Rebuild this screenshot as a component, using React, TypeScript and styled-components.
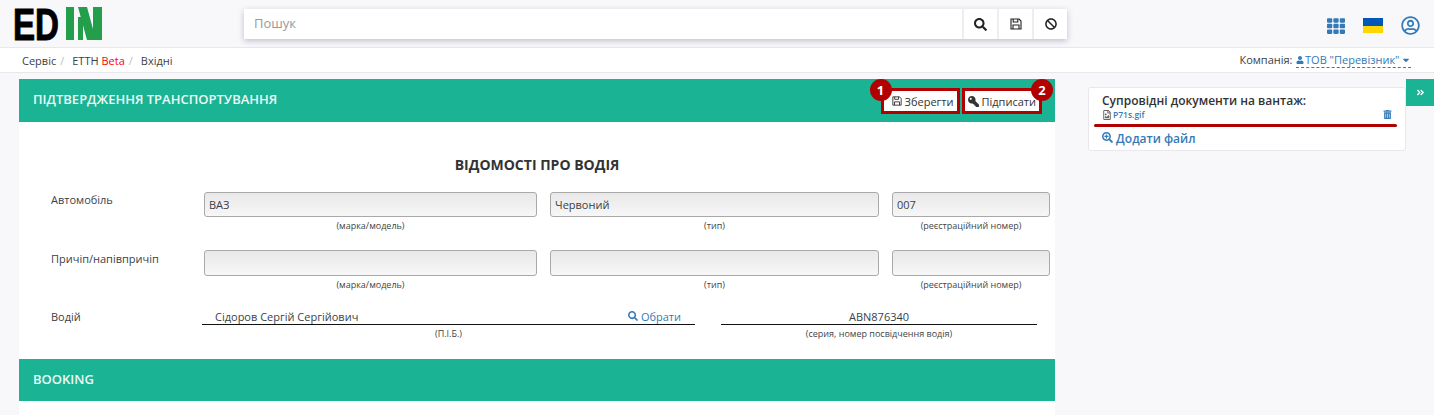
import React from 'react'
import styled, { createGlobalStyle } from 'styled-components'
import { FaSearch, FaBan, FaUser, FaKey, FaCaretDown, FaSearchPlus, FaTrashAlt, FaRegFileImage, FaAngleDoubleRight, FaTh, FaRegUserCircle } from 'react-icons/fa'

const GlobalStyle = createGlobalStyle`
  html, body { margin: 0; padding: 0; background: #f8f8fb; }
  body { font-family: "Open Sans", "Liberation Sans", sans-serif; font-size: 12px; color: #3a3f47; overflow: hidden; }
`

function Floppy({ size }: { size: number }) {
  return (
    <svg width={size} height={size} viewBox="0 0 12 12" fill="none" stroke="currentColor" strokeWidth="1.1">
      <path d="M1 1h8l2 2v8H1z" />
      <path d="M3.2 1v3h4.6V1M3 11V7h6v4" />
    </svg>
  )
}

export default function App() {
  return (
    <>
      <GlobalStyle />
      <Page>
        <Header>
          <Logo />
          <SearchBar>
            <SearchText>Пошук</SearchText>
            <SearchButton><FaSearch size={13} /></SearchButton>
            <SearchButton><Floppy size={12} /></SearchButton>
            <SearchButton><FaBan size={12} /></SearchButton>
          </SearchBar>
          <HeaderIcons>
            <FaTh size={18} color="#337ab7" />
            <Flag><FlagBlue /><FlagYellow /></Flag>
            <FaRegUserCircle size={19} color="#337ab7" />
          </HeaderIcons>
        </Header>
        <Crumbs>
          <CrumbList>
            <span>Сервіс</span><Slash>/</Slash>
            <span>ЕТТН <Beta>Beta</Beta></span><Slash>/</Slash>
            <span>Вхідні</span>
          </CrumbList>
          <Company>
            Компанія:
            <CompanyLink><FaUser size={8} />ТОВ "Перевізник"<FaCaretDown size={10} /></CompanyLink>
          </Company>
        </Crumbs>
        <Content>
          <Main>
            <Band>
              <BandTitle>ПІДТВЕРДЖЕННЯ ТРАНСПОРТУВАННЯ</BandTitle>
              <BandActions>
                <ActionButton $padLeft={8}>
                  <Badge>1</Badge>
                  <Floppy size={10} /> Зберегти
                </ActionButton>
                <ActionButton $padLeft={3}>
                  <Badge $right>2</Badge>
                  <KeyIcon size={11} /> Підписати
                </ActionButton>
              </BandActions>
            </Band>
            <FormBody>
              <FormTitle>ВІДОМОСТІ ПРО ВОДІЯ</FormTitle>
              <FormRow>
                <RowLabel>Автомобіль</RowLabel>
                <div><Input>ВАЗ</Input><Hint>(марка/модель)</Hint></div>
                <div><Input>Червоний</Input><Hint>(тип)</Hint></div>
                <div><Input>007</Input><Hint>(реєстраційний номер)</Hint></div>
              </FormRow>
              <FormRow>
                <RowLabel $low>Причіп/напівпричіп</RowLabel>
                <div><Input $tall /><Hint>(марка/модель)</Hint></div>
                <div><Input $tall /><Hint>(тип)</Hint></div>
                <div><Input $tall /><Hint>(реєстраційний номер)</Hint></div>
              </FormRow>
              <DriverRow>
                <DriverLabel>Водій</DriverLabel>
                <DriverName>
                  <UnderLine>
                    <span>Сідоров Сергій Сергійович</span>
                    <PickLink><FaSearch size={10} /> Обрати</PickLink>
                  </UnderLine>
                  <Hint>(П.І.Б.)</Hint>
                </DriverName>
                <DriverDoc>
                  <DocLine>ABN876340</DocLine>
                  <Hint>(серия, номер посвідчення водія)</Hint>
                </DriverDoc>
              </DriverRow>
            </FormBody>
            <Band $second>
              <BandTitle>BOOKING</BandTitle>
            </Band>
            <FormTail />
          </Main>
          <Side>
            <DocsCard>
              <DocsTitle>Супровідні документи на вантаж:</DocsTitle>
              <FileRow>
                <FileName><FaRegFileImage size={10} color="#666" />P71s.gif</FileName>
                <TrashIcon size={9} />
              </FileRow>
              <RedLine />
              <AddFile><FaSearchPlus size={11} /> Додати файл</AddFile>
            </DocsCard>
            <SideToggle><FaAngleDoubleRight size={9} /></SideToggle>
          </Side>
        </Content>
      </Page>
    </>
  )
}

function Logo() {
  return (
    <LogoBox>
      <svg width="102" height="50" viewBox="0 0 102 50">
        <text x="13" y="40" fontFamily="Liberation Sans" fontWeight="700" fontSize="44" textLength="46" lengthAdjust="spacingAndGlyphs" stroke="#000" strokeWidth="1" fill="#000">ED</text>
        <rect x="66" y="7" width="8" height="33" fill="#239f4b" />
        <rect x="78" y="17" width="5" height="23" fill="#239f4b" />
        <polygon points="78,7 87,7 96,40 87,40" fill="#239f4b" />
        <rect x="93" y="7" width="9" height="33" fill="#239f4b" />
      </svg>
    </LogoBox>
  )
}

const Page = styled.div`
  width: 1434px;
  height: 415px;
  overflow: hidden;
`

const Header = styled.header`
  height: 47px;
  display: flex;
  align-items: flex-start;
  background: #f8f8fb;
  border-bottom: 1px solid #e7e7ec;
`

const LogoBox = styled.div`
  width: 244px;
  height: 47px;
`

const SearchBar = styled.div`
  margin-top: 9px;
  width: 823px;
  height: 30px;
  display: flex;
  background: #fff;
  box-shadow: 0 2px 6px rgba(60, 60, 90, 0.3);
`

const SearchText = styled.div`
  flex: 1;
  padding-left: 10px;
  line-height: 29px;
  font-size: 13px;
  color: #999;
`

const SearchButton = styled.div`
  width: 33px;
  display: flex;
  align-items: center;
  justify-content: center;
  border-left: 2px solid #eee;
  color: #222;
`

const HeaderIcons = styled.div`
  margin-left: 260px;
  margin-top: 16px;
  display: flex;
  align-items: center;
  gap: 18px;
`

const Flag = styled.div`
  width: 20px;
  height: 15px;
  display: flex;
  flex-direction: column;
`

const FlagBlue = styled.div`
  flex: 1;
  background: #0057b7;
`

const FlagYellow = styled.div`
  flex: 1;
  background: #ffd700;
`

const Crumbs = styled.div`
  height: 24px;
  display: flex;
  align-items: center;
  justify-content: space-between;
  padding: 0 23px 0 22px;
  background: #fff;
  border-bottom: 1px solid #e7e7ec;
  font-size: 11px;
`

const CrumbList = styled.div`
  display: flex;
  gap: 4px;
`

const Slash = styled.span`
  color: #bbb;
  margin-right: 4px;
`

const Beta = styled.span`
  color: #f00;
`

const Company = styled.div`
  display: flex;
  gap: 3px;
`

const CompanyLink = styled.span`
  display: inline-flex;
  align-items: center;
  gap: 1.5px;
  color: #337ab7;
  border-bottom: 1px dashed #337ab7;
`

const Content = styled.div`
  display: flex;
  padding: 6px 0 0 19px;
  align-items: flex-start;
`

const Main = styled.main`
  width: 1036px;
  background: #fff;
`

const Band = styled.div<{ $second?: boolean }>`
  height: ${p => (p.$second ? 42 : 43)}px;
  display: flex;
  align-items: center;
  justify-content: space-between;
  padding: 0 13px 0 14px;
  background: #1ab394;
`

const BandTitle = styled.h2`
  margin: 0 0 3px;
  font-size: 13px;
  font-weight: 600;
  color: #eafaf6;
`

const BandActions = styled.div`
  display: flex;
  gap: 2px;
  margin-top: 1px;
`

const ActionButton = styled.div<{ $padLeft: number }>`
  position: relative;
  height: 20px;
  padding: 0 3px 0 ${p => p.$padLeft}px;
  display: flex;
  align-items: center;
  gap: 3px;
  background: #fff;
  border: 3px solid #b00000;
  font-size: 11px;
  color: #333;
`

const KeyIcon = styled(FaKey)`
  transform: scaleX(-1);
`

const TrashIcon = styled(FaTrashAlt)`
  color: #337ab7;
`

const Badge = styled.span<{ $right?: boolean }>`
  position: absolute;
  top: -12px;
  ${p => (p.$right ? 'right: -14px;' : 'left: -14px;')}
  width: 22px;
  height: 22px;
  border-radius: 50%;
  background: #b00000;
  color: #fff;
  font-size: 13px;
  font-weight: 700;
  text-align: center;
  line-height: 22px;
`

const FormBody = styled.div`
  height: 237px;
  padding-top: 33px;
  box-sizing: border-box;
`

const FormTitle = styled.h3`
  margin: 0 0 18px;
  text-align: center;
  font-size: 14px;
  line-height: 19px;
  font-weight: 700;
  color: #333;
`

const FormRow = styled.div`
  display: grid;
  grid-template-columns: 172px 333px 329px 158px;
  column-gap: 13px;
  height: 58px;
  font-size: 11px;
`

const RowLabel = styled.div<{ $low?: boolean }>`
  padding: ${p => (p.$low ? 1 : 0)}px 0 0 32px;
  line-height: 16px;
`

const Input = styled.div<{ $tall?: boolean }>`
  height: ${p => (p.$tall ? 26 : 25)}px;
  box-sizing: border-box;
  padding: 0 4px;
  line-height: 24px;
  border: 1px solid #a9a9a9;
  border-radius: 3px;
  background: linear-gradient(#e8e8e8, #f7f7f7);
`

const Hint = styled.div`
  margin-top: 2px;
  text-align: center;
  font-size: 9px;
  line-height: 14px;
  color: #444;
`

const DriverRow = styled.div`
  display: flex;
  font-size: 11px;
`

const DriverLabel = styled.div`
  width: 183px;
  padding-left: 32px;
  box-sizing: border-box;
  line-height: 18px;
`

const DriverName = styled.div`
  width: 493px;
`

const UnderLine = styled.div`
  height: 16px;
  line-height: 18px;
  display: flex;
  justify-content: space-between;
  padding: 0 14px 0 13px;
  border-bottom: 1px solid #111;
`

const PickLink = styled.span`
  color: #337ab7;
`

const DriverDoc = styled.div`
  width: 316px;
  margin-left: 26px;
`

const DocLine = styled.div`
  height: 16px;
  line-height: 18px;
  text-align: center;
  border-bottom: 1px solid #111;
`

const FormTail = styled.div`
  height: 20px;
`

const Side = styled.aside`
  position: relative;
  flex: 1;
  padding: 8px 28px 0 33px;
`

const DocsCard = styled.div`
  height: 64px;
  box-sizing: border-box;
  padding: 5px 13px;
  background: #fff;
  border: 1px solid #e7e7ec;
  border-radius: 3px;
`

const DocsTitle = styled.div`
  font-size: 12px;
  font-weight: 600;
  line-height: 15px;
  color: #333;
`

const FileRow = styled.div`
  display: flex;
  justify-content: space-between;
  align-items: center;
  height: 13px;
`

const FileName = styled.span`
  display: flex;
  align-items: center;
  gap: 1px;
  font-size: 8.5px;
  font-weight: 600;
  color: #337ab7;
`

const RedLine = styled.div`
  height: 3px;
  margin: 3px -5px 3px -8px;
  border-radius: 2px;
  background: #b00000;
`

const AddFile = styled.div`
  font-size: 12px;
  font-weight: 600;
  color: #337ab7;
`

const SideToggle = styled.div`
  position: absolute;
  top: 0;
  right: 0;
  width: 28px;
  height: 27px;
  display: flex;
  align-items: center;
  justify-content: center;
  background: #1ab394;
  color: #fff;
`
